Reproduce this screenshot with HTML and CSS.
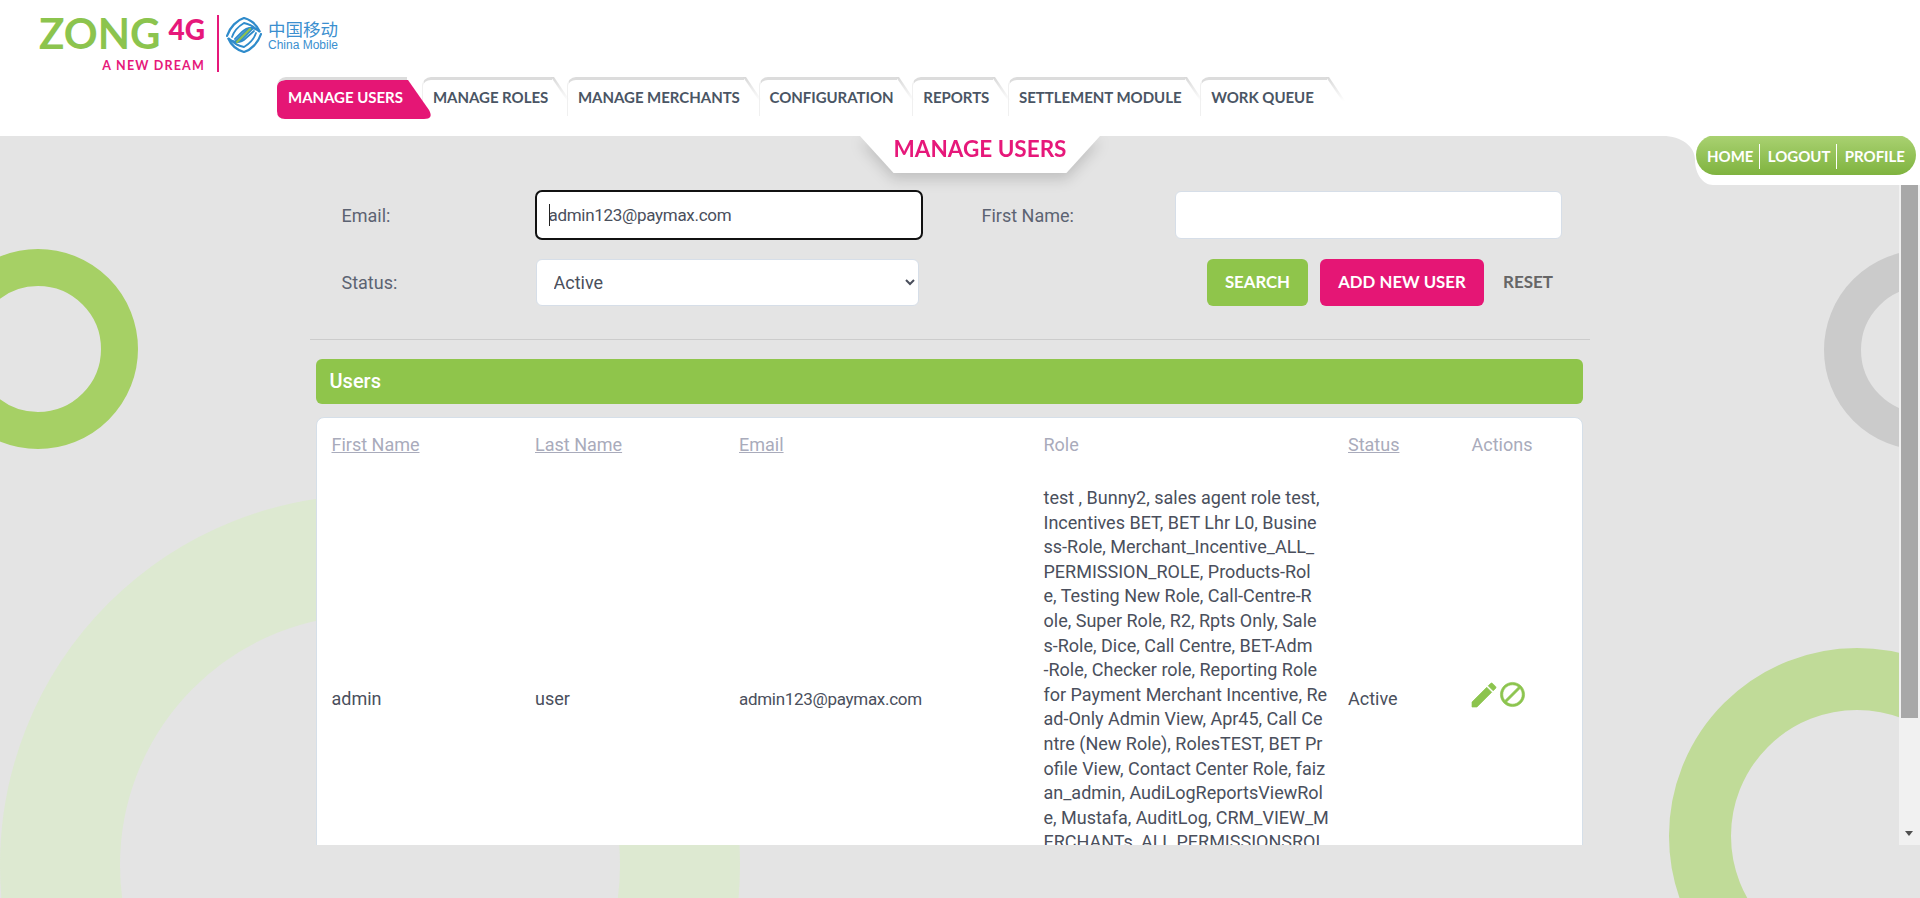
FILE: index.html
```html
<!DOCTYPE html>
<html lang="en">
  <head>
    <meta charset="UTF-8" />
    <meta name="viewport" content="width=device-width, initial-scale=1.0" />
    <title>Manage Users</title>
    <link rel="stylesheet" href="styles.css">
  </head>
  <body>
    <header class="site-header">
      <div class="logo">
        <div class="logo-zong">
          <div class="logo-top"><span class="logo-name">ZONG</span><span class="logo-4g">4G</span></div>
          <div class="logo-tag">A NEW DREAM</div>
        </div>
        <div class="logo-divider"></div>
        <svg class="logo-mark" viewBox="0 0 36 36" fill="none" stroke-linecap="round">
          <path d="M1 19C4 10 11 3 18 1c7 2 13 7 16 14-5-5-10-5-14-1L10 24" stroke="#2f8bcb" stroke-width="2.2" />
          <path d="M6 20c2-6 7-11 12-14 5 1 9 3 12 6-5-2-10-1-14 3l-7 7" stroke="#2f8bcb" stroke-width="1.8" />
          <path d="M35 17c-3 9-10 16-17 18-7-2-13-7-16-14 5 5 10 5 14 1l10-10" stroke="#2f8bcb" stroke-width="2.2" />
          <path d="M30 16c-2 6-7 11-12 14-5-1-9-3-12-6 5 2 10 1 14-3l8-7" stroke="#2f8bcb" stroke-width="1.8" />
          <path d="M11 25l13-13" stroke="#8cc152" stroke-width="2.2" />
        </svg>
        <div class="logo-cm">
          <div class="logo-cn">中国移动</div>
          <div class="logo-en">China Mobile</div>
        </div>
      </div>
      <nav class="tabs">
        <a class="tab active" href="#">MANAGE USERS</a>
        <a class="tab" href="#">MANAGE ROLES</a>
        <a class="tab" href="#">MANAGE MERCHANTS</a>
        <a class="tab" href="#">CONFIGURATION</a>
        <a class="tab" href="#">REPORTS</a>
        <a class="tab" href="#">SETTLEMENT MODULE</a>
        <a class="tab" href="#">WORK QUEUE</a>
      </nav>
    </header>

    <main class="panel">
      <div class="ring ring-left"></div>
      <div class="ring ring-big"></div>
      <div class="ring ring-gray"></div>
      <div class="ring ring-right"></div>

      <svg class="panel-notch" viewBox="0 0 257 49">
        <path d="M0 0C18 0 32 10 32 24C32 38 40 49 50 49H257V0Z" fill="#fff" />
      </svg>
      <div class="user-menu">
        <a href="#">HOME</a>
        <a href="#">LOGOUT</a>
        <a href="#">PROFILE</a>
      </div>

      <div class="title-row">
        <h1 class="page-title">MANAGE USERS</h1>
      </div>

      <div class="scroll-area">
        <div class="scroll-content">
          <div class="container">
            <form class="search-form">
              <label class="label-a">Email:</label>
              <div class="field">
                <input class="input email-text is-focus" type="text" value="admin123@paymax.com" />
                <span class="caret"></span>
              </div>
              <label class="label-b">First Name:</label>
              <input class="input" type="text" />
              <label class="label-a">Status:</label>
              <select class="input select">
                <option>Active</option>
                <option>Inactive</option>
              </select>
              <div class="form-actions">
                <button class="btn btn-green" type="button">SEARCH</button>
                <button class="btn btn-pink" type="button">ADD NEW USER</button>
                <button class="btn-reset" type="button">RESET</button>
              </div>
            </form>

            <hr class="divider" />

            <div class="section-bar">Users</div>
            <div class="card">
              <table class="users-table">
                <thead>
                  <tr>
                    <th class="col-first"><a href="#">First Name</a></th>
                    <th class="col-last"><a href="#">Last Name</a></th>
                    <th class="col-email"><a href="#">Email</a></th>
                    <th class="col-role">Role</th>
                    <th class="col-status"><a href="#">Status</a></th>
                    <th class="col-actions">Actions</th>
                  </tr>
                </thead>
                <tbody>
                  <tr>
                    <td>admin</td>
                    <td>user</td>
                    <td class="email-text">admin123@paymax.com</td>
                    <td class="roles">test , Bunny2, sales agent role test,<br>Incentives BET, BET Lhr L0, Busine<br>ss-Role, Merchant_Incentive_ALL_<br>PERMISSION_ROLE, Products-Rol<br>e, Testing New Role, Call-Centre-R<br>ole, Super Role, R2, Rpts Only, Sale<br>s-Role, Dice, Call Centre, BET-Adm<br>-Role, Checker role, Reporting Role<br>for Payment Merchant Incentive, Re<br>ad-Only Admin View, Apr45, Call Ce<br>ntre (New Role), RolesTEST, BET Pr<br>ofile View, Contact Center Role, faiz<br>an_admin, AudiLogReportsViewRol<br>e, Mustafa, AuditLog, CRM_VIEW_M<br>ERCHANTs, ALL PERMISSIONSROL<br>E, Merchant Role<br>&nbsp;</td>
                    <td>Active</td>
                    <td class="actions">
                      <svg class="icon icon-edit" viewBox="0 0 24 24"><path d="M3 17.25V21h3.75L17.81 9.94l-3.75-3.75L3 17.25zM20.71 7.04c.39-.39.39-1.02 0-1.41l-2.34-2.34c-.39-.39-1.02-.39-1.41 0l-1.83 1.83 3.75 3.75 1.83-1.83z" /></svg>
                      <svg class="icon icon-block" viewBox="0 0 24 24"><path d="M12 2C6.48 2 2 6.48 2 12s4.48 10 10 10 10-4.48 10-10S17.52 2 12 2zM4 12c0-4.42 3.58-8 8-8 1.85 0 3.55.63 4.9 1.69L5.69 16.9C4.63 15.55 4 13.85 4 12zm8 8c-1.85 0-3.55-.63-4.9-1.69L18.31 7.1C19.37 8.45 20 10.15 20 12c0 4.42-3.58 8-8 8z" /></svg>
                    </td>
                  </tr>
                </tbody>
              </table>
            </div>
          </div>
        </div>
        <div class="scrollbar">
          <div class="scrollbar-thumb"></div>
          <div class="scrollbar-arrow"></div>
        </div>
      </div>
    </main>
  </body>
</html>
```

FILE: styles.css
```css
* {
  box-sizing: border-box;
}
html,
body {
  margin: 0;
  padding: 0;
  height: 898px;
  overflow: hidden;
}
body {
  font-family: Roboto, "Liberation Sans", sans-serif;
  font-size: 18px;
  color: #4a4f5c;
  background-color: #fff;
}
a {
  color: inherit;
}

/* header */
.site-header {
  height: 136px;
  display: flex;
  flex-direction: column;
}
.logo {
  height: 77px;
  padding: 15px 0 0 39px;
  display: flex;
  align-items: flex-start;
}
.logo-zong {
  width: 166px;
  font-family: Lato, sans-serif;
}
.logo-top {
  display: flex;
  align-items: flex-start;
  height: 45px;
}
.logo-name {
  font-size: 42px;
  line-height: 36px;
  font-weight: 700;
  color: #8cc44e;
}
.logo-4g {
  margin-left: 8px;
  font-size: 28px;
  line-height: 28px;
  font-weight: 900;
  color: #e6187a;
}
.logo-tag {
  font-size: 12.5px;
  line-height: 12px;
  font-weight: 700;
  letter-spacing: 1.2px;
  color: #e6187a;
  text-align: right;
}
.logo-divider {
  width: 2px;
  height: 57px;
  margin-left: 12px;
  background-color: #e6187a;
}
.logo-mark {
  width: 36px;
  height: 36px;
  margin: 2px 0 0 7px;
}
.logo-cm {
  margin: 4px 0 0 6px;
  color: #3b8fcf;
}
.logo-cn {
  font-family: "Noto Sans CJK SC", sans-serif;
  font-size: 17.5px;
  line-height: 20px;
}
.logo-en {
  font-family: "Liberation Sans", sans-serif;
  font-size: 12px;
  line-height: 13px;
}

/* tabs */
.tabs {
  display: flex;
  margin-left: 277px;
  height: 42px;
}
.tab {
  position: relative;
  z-index: 0;
  height: 42px;
  padding: 3px 18.7px 0 11px;
  font-family: Lato, sans-serif;
  font-size: 15px;
  font-weight: 700;
  letter-spacing: -0.03px;
  line-height: 34px;
  color: #4a5564;
  text-decoration: none;
  white-space: nowrap;
}
.tab:last-child {
  padding-right: 28px;
}
.tab::before {
  content: "";
  position: absolute;
  top: 0;
  left: 0;
  right: 15px;
  height: 36px;
  border-top: 3px solid #dcdcdc;
  border-left: 1px solid #f0f0f0;
  border-top-left-radius: 9px;
}
.tab::after {
  content: "";
  position: absolute;
  top: 0;
  right: 13px;
  width: 3px;
  height: 24px;
  background: linear-gradient(#d8d8d8, rgba(216, 216, 216, 0));
  transform: skewX(34deg);
  transform-origin: top;
}
.tab.active {
  z-index: 1;
  margin-right: -9px;
  padding-right: 28px;
  color: #fff;
}
.tab.active::before {
  right: 24px;
  border-left: 0;
}
.tab.active::after {
  z-index: -1;
  top: 3px;
  right: auto;
  left: 0;
  width: 154px;
  height: 39px;
  background: #e51675;
  clip-path: path("M8 0H131L152 30Q157 39 147 39H8Q0 39 0 31V8Q0 0 8 0Z");
  transform: none;
}

/* grey panel */
.panel {
  position: relative;
  height: 762px;
  background-color: #e4e4e4;
  overflow: hidden;
}
.ring {
  position: absolute;
  border-radius: 50%;
  border-style: solid;
}
.ring-left {
  left: -62px;
  top: 113px;
  width: 200px;
  height: 200px;
  border-width: 37px;
  border-color: #a6d065;
}
.ring-big {
  left: 0;
  top: 359px;
  width: 740px;
  height: 740px;
  border-width: 120px;
  border-color: #dde9d1;
}
.ring-gray {
  left: 1824px;
  top: 114px;
  width: 200px;
  height: 200px;
  border-width: 37px;
  border-color: #cbcbcb;
}
.ring-right {
  left: 1669px;
  top: 512px;
  width: 376px;
  height: 376px;
  border-width: 62px;
  border-color: #c0db98;
}
.panel-notch {
  position: absolute;
  top: 0;
  right: 0;
  width: 257px;
  height: 49px;
}
.user-menu {
  position: absolute;
  z-index: 2;
  top: -1px;
  right: 4px;
  width: 220px;
  height: 40px;
  padding: 9px 11px 6px;
  display: flex;
  justify-content: space-between;
  border-radius: 20px;
  background: linear-gradient(#aad272, #7fb33f);
  font-family: Lato, sans-serif;
  font-size: 15px;
  font-weight: 700;
  line-height: 25px;
}
.user-menu a {
  color: #fff;
  text-decoration: none;
}
.user-menu a + a {
  padding-left: 8px;
  border-left: 1px solid #fff;
}
.title-row {
  position: relative;
  height: 49px;
  padding-left: 860px;
  filter: drop-shadow(0 6px 7px rgba(0, 0, 0, 0.16));
}
.page-title {
  width: 240px;
  height: 37px;
  margin: 0;
  background-color: #fff;
  clip-path: polygon(0 0, 100% 0, 86% 100%, 14% 100%);
  font-family: Lato, sans-serif;
  font-size: 22.5px;
  font-weight: 700;
  line-height: 26px;
  color: #e6187a;
  text-align: center;
}

/* scrolling part */
.scroll-area {
  position: relative;
  height: 660px;
  display: flex;
}
.scroll-content {
  flex: 1;
  overflow: hidden;
}
.scrollbar {
  position: relative;
  width: 21px;
  padding: 0 2px;
  background-color: #f1f1f1;
}
.scrollbar-thumb {
  height: 533px;
  background-color: #a8a8a8;
}
.scrollbar-arrow {
  position: absolute;
  left: 6px;
  bottom: 9px;
  border-style: solid;
  border-width: 5px 4.5px 0;
  border-color: #505050 transparent transparent;
}
.container {
  width: 1280px;
  margin: 0 auto;
}
.search-form {
  display: grid;
  grid-template-columns: 226px 386px 60px 193.5px 387px;
  row-gap: 20px;
  padding-top: 6px;
  align-items: center;
}
.search-form label {
  font-size: 18px;
  color: #5c6372;
}
.label-a {
  grid-column: 1;
  padding-left: 32px;
}
.label-b {
  grid-column: 4;
}
.field {
  position: relative;
}
.input {
  display: block;
  width: 387px;
  height: 48px;
  padding: 0 12px;
  border: 1px solid #d6dee8;
  border-radius: 6px;
  background-color: #fff;
  font-family: inherit;
  font-size: 18px;
  color: #4a4f5c;
}
.field .input {
  width: 386px;
}
.email-text {
  font-size: 17px;
  letter-spacing: -0.3px;
}
.is-focus {
  outline: 2px solid #111;
  outline-offset: -1px;
}
.caret {
  position: absolute;
  left: 13px;
  top: 13px;
  width: 1px;
  height: 22px;
  background-color: #222;
}
.select {
  width: 383.5px;
  height: 47px;
  padding-left: 13px;
}
.form-actions {
  grid-column: 3 / 6;
  display: flex;
  justify-content: flex-end;
  align-items: center;
  padding-right: 9px;
}
.btn {
  height: 47px;
  padding: 0 0 2px;
  border: 0;
  border-radius: 6px;
  font-family: Lato, sans-serif;
  font-size: 16.8px;
  font-weight: 700;
  color: #fff;
}
.btn-green {
  width: 101px;
  margin-right: 12px;
  background-color: #8fc54b;
}
.btn-pink {
  width: 164px;
  margin-right: 19px;
  background-color: #e51675;
}
.btn-reset {
  padding: 0 0 2px;
  border: 0;
  background: none;
  font-family: Lato, sans-serif;
  font-size: 17px;
  font-weight: 700;
  color: #666;
}
.divider {
  height: 1px;
  margin: 33px 0 19px;
  border: 0;
  background-color: #ccc;
}
.section-bar {
  width: 1267px;
  height: 45px;
  margin-left: 6px;
  padding-left: 14px;
  border-radius: 6px;
  background-color: #8fc54b;
  font-size: 20px;
  font-weight: 500;
  line-height: 44px;
  color: #fff;
}
.card {
  width: 1267px;
  margin: 13px 0 0 6px;
  border: 1px solid #d5dfe9;
  border-radius: 8px 8px 0 0;
  background-color: #fff;
}
.users-table {
  width: 1265px;
  table-layout: fixed;
  border-collapse: collapse;
  font-size: 18px;
  line-height: 24.6px;
}
.users-table th {
  height: 55px;
  padding: 0 15px;
  font-weight: 400;
  color: #a9abbb;
  text-align: left;
}
.users-table td {
  padding: 13px 15px;
  vertical-align: middle;
}
.col-first {
  width: 203.5px;
}
.col-last {
  width: 204px;
}
.col-email {
  width: 304.5px;
}
.col-role {
  width: 304.5px;
}
.col-status {
  width: 123.5px;
}
.users-table .email-text {
  font-size: 17px;
}
.users-table .roles {
  padding-bottom: 21px;
  white-space: nowrap;
}
.icon {
  fill: #8cc44e;
  stroke: #8cc44e;
  stroke-width: 0.5;
  vertical-align: middle;
  margin-top: -11px;
}
.icon-edit {
  width: 32px;
  height: 32px;
  margin-left: -4px;
}
.icon-block {
  width: 29px;
  height: 29px;
  margin-left: -6px;
}
```
